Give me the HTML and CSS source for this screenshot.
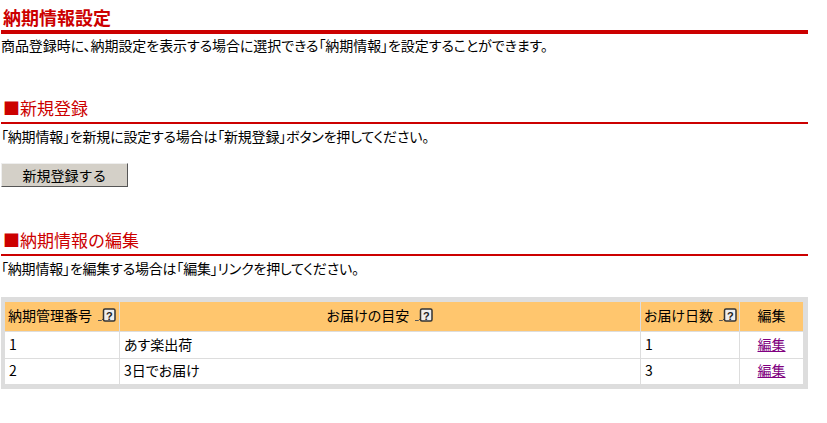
FILE: index.html
```html
<!DOCTYPE html>
<html lang="ja">
<head>
    <meta charset="utf-8">
    <title>納期情報設定</title>
    <link rel="stylesheet" href="styles.css">
</head>
<body>
    <div class="page">
        <h1 class="page-title">納期情報設定</h1>
        <p class="lead">商品登録時に、納期設定を表示する場合に選択できる「納期情報」を設定することができます。</p>

        <h2 class="section-title section-new">■新規登録</h2>
        <p class="note">「納期情報」を新規に設定する場合は「新規登録」ボタンを押してください。</p>
        <button type="button" class="btn">新規登録する</button>

        <h2 class="section-title section-edit">■納期情報の編集</h2>
        <p class="note">「納期情報」を編集する場合は「編集」リンクを押してください。</p>

        <div class="table-wrap">
            <table class="list">
                <colgroup>
                    <col class="col-id">
                    <col class="col-name">
                    <col class="col-days">
                    <col class="col-edit">
                </colgroup>
                <thead>
                    <tr>
                        <th>納期管理番号 <svg class="help" width="18" height="15" viewBox="0 0 18 15"><path d="M0 12.500h3.500l2-2" stroke="#555" fill="none"/><rect x="5.500" y="1" width="11.500" height="12" rx="1.500" fill="#eee" stroke="#333" stroke-width="1.500"/><text x="11.250" y="11.500" text-anchor="middle" class="help-mark">?</text></svg></th>
                        <th>お届けの目安 <svg class="help" width="18" height="15" viewBox="0 0 18 15"><path d="M0 12.500h3.500l2-2" stroke="#555" fill="none"/><rect x="5.500" y="1" width="11.500" height="12" rx="1.500" fill="#eee" stroke="#333" stroke-width="1.500"/><text x="11.250" y="11.500" text-anchor="middle" class="help-mark">?</text></svg></th>
                        <th>お届け日数 <svg class="help" width="18" height="15" viewBox="0 0 18 15"><path d="M0 12.500h3.500l2-2" stroke="#555" fill="none"/><rect x="5.500" y="1" width="11.500" height="12" rx="1.500" fill="#eee" stroke="#333" stroke-width="1.500"/><text x="11.250" y="11.500" text-anchor="middle" class="help-mark">?</text></svg></th>
                        <th>編集</th>
                    </tr>
                </thead>
                <tbody>
                    <tr class="row-first">
                        <td>1</td>
                        <td>あす楽出荷</td>
                        <td>1</td>
                        <td class="center"><a href="#" class="edit-link">編集</a></td>
                    </tr>
                    <tr>
                        <td>2</td>
                        <td>3日でお届け</td>
                        <td>3</td>
                        <td class="center"><a href="#" class="edit-link">編集</a></td>
                    </tr>
                </tbody>
            </table>
        </div>
    </div>
</body>
</html>
```

FILE: styles.css
```css
body {
    margin: 0;
    background: #fff;
    color: #000;
    font-family: "Noto Sans CJK JP", "Liberation Sans", sans-serif;
    font-size: 14px;
    font-feature-settings: "palt";
}
.page {
    width: 807px;
    margin-left: 1px;
}
.page-title {
    margin: 0;
    height: 34px;
    padding: 5px 0 0 2px;
    box-sizing: border-box;
    border-bottom: 4px solid #cc0000;
    color: #cc0000;
    font-size: 18px;
    font-feature-settings: normal;
    line-height: 24px;
}
.lead, .note {
    margin: 0;
    line-height: 18px;
}
.lead {
    margin-top: 2px;
    letter-spacing: -0.07px;
}
.section-title {
    margin: 0;
    height: 26px;
    padding-left: 2px;
    border-bottom: 2px solid #cc0000;
    color: #cc0000;
    font-size: 17px;
    font-weight: normal;
    font-feature-settings: normal;
    line-height: 24px;
}
.section-new {
    margin-top: 42px;
}
.section-edit {
    margin-top: 41px;
}
.note {
    margin-top: 3px;
    letter-spacing: -0.2px;
}
.btn {
    display: block;
    width: 127px;
    height: 24px;
    margin-top: 18px;
    padding: 0;
    background-color: #d4d0c8;
    border: 1px solid;
    border-color: #eee #555 #555 #eee;
    font-family: inherit;
    font-size: 14px;
    font-feature-settings: normal;
    line-height: 20px;
    color: #000;
}
.table-wrap {
    margin-top: 20px;
    padding: 4px 4px 4px 3px;
    background: #ddd;
}
.list {
    width: 100%;
    table-layout: fixed;
    border-collapse: collapse;
    background: #fff;
}
.col-id { width: 115px; }
.col-name { width: 521px; }
.col-days { width: 99px; }
.list th {
    height: 26px;
    padding: 0 3px 3px;
    background: #ffc66e;
    font-weight: normal;
    border: 1px solid #ddd;
    white-space: nowrap;
}
.list td {
    height: 22px;
    padding: 0 4px 3px;
    border: 1px solid #ddd;
}
.list .row-first td {
    height: 23px;
}
.center {
    text-align: center;
}
.edit-link {
    color: #800080;
}
.help {
    vertical-align: -2px;
    margin-left: 3px;
}
.help-mark {
    font-family: "Liberation Sans", sans-serif;
    font-size: 11px;
    font-weight: bold;
    fill: #222;
}
```
